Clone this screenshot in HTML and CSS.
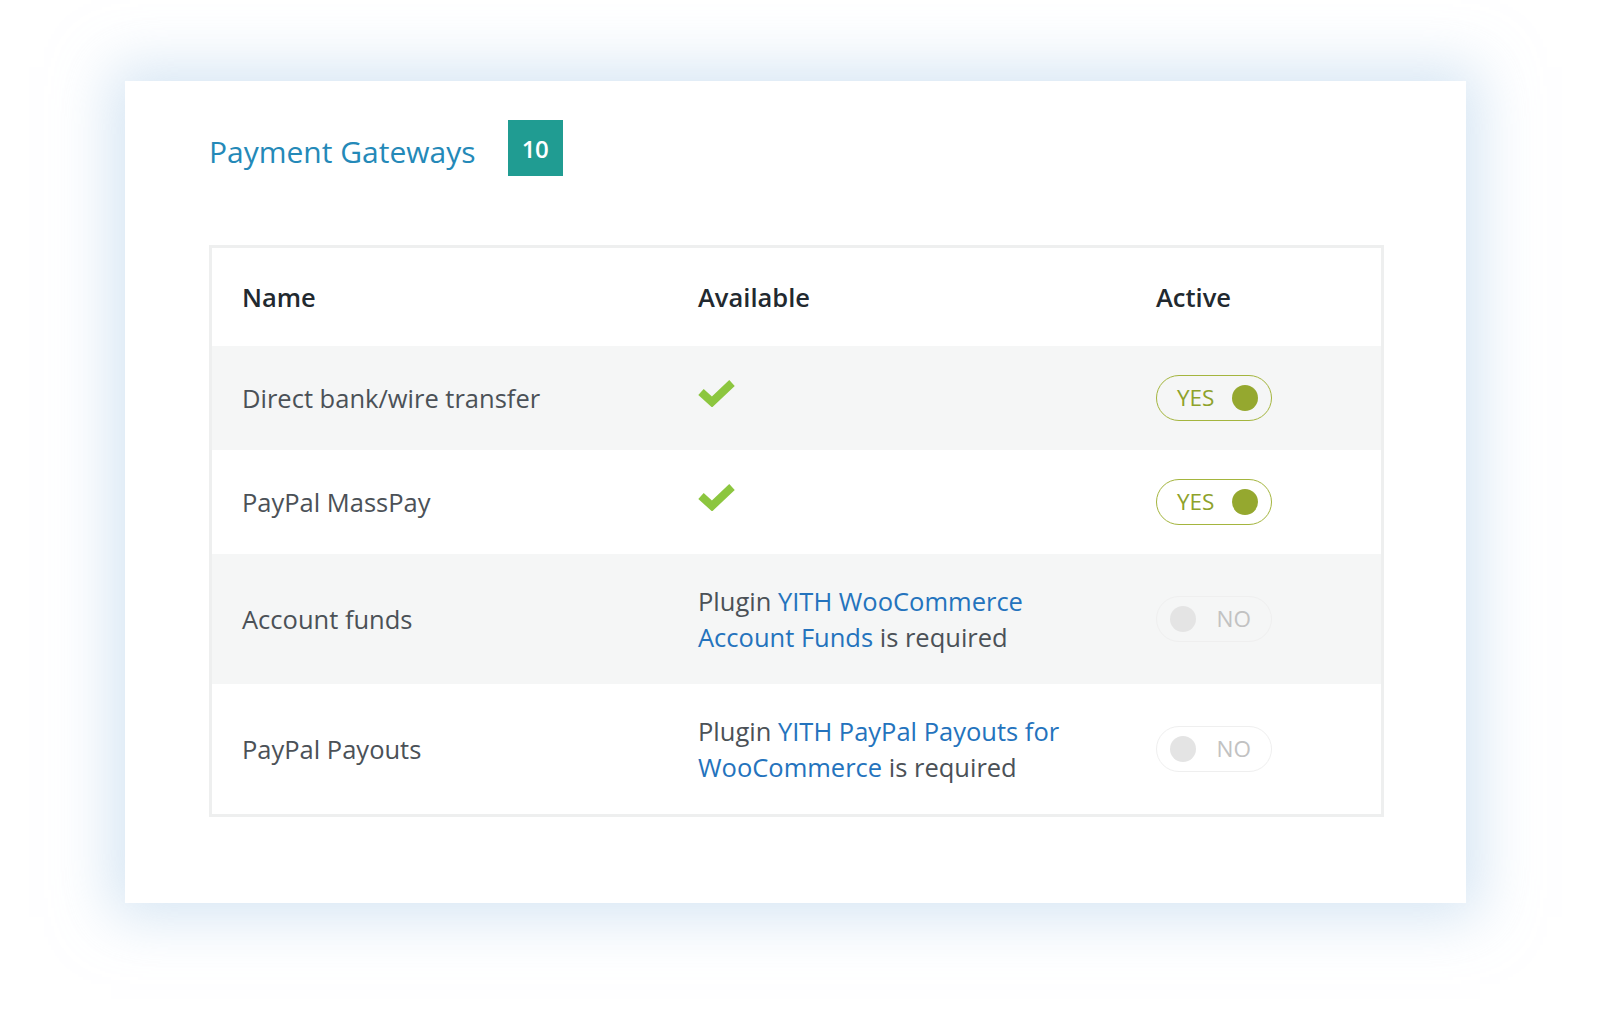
FILE: index.html
```html
<!DOCTYPE html>
<html lang="en">
<head>
<meta charset="utf-8">
<title>Payment Gateways</title>
<link rel="stylesheet" href="styles.css">
</head>
<body>
<div class="card">
  <div class="card-head">
    <h2 class="title">Payment Gateways</h2>
    <span class="badge">10</span>
  </div>
  <div class="table">
    <div class="row head">
      <div class="cell">Name</div>
      <div class="cell">Available</div>
      <div class="cell">Active</div>
    </div>
    <div class="row alt">
      <div class="cell">Direct bank/wire transfer</div>
      <div class="cell"><svg class="check" viewBox="0 0 38 28" width="38" height="28"><path d="M3 13 L14 23 L34 4" fill="none" stroke="#8cc63f" stroke-width="8"/></svg></div>
      <div class="cell"><span class="toggle on"><span class="tlabel">YES</span><span class="dot"></span></span></div>
    </div>
    <div class="row">
      <div class="cell">PayPal MassPay</div>
      <div class="cell"><svg class="check" viewBox="0 0 38 28" width="38" height="28"><path d="M3 13 L14 23 L34 4" fill="none" stroke="#8cc63f" stroke-width="8"/></svg></div>
      <div class="cell"><span class="toggle on"><span class="tlabel">YES</span><span class="dot"></span></span></div>
    </div>
    <div class="row alt">
      <div class="cell">Account funds</div>
      <div class="cell"><p class="req">Plugin <a href="#">YITH WooCommerce Account Funds</a> is required</p></div>
      <div class="cell"><span class="toggle off"><span class="dot"></span><span class="tlabel">NO</span></span></div>
    </div>
    <div class="row">
      <div class="cell">PayPal Payouts</div>
      <div class="cell"><p class="req">Plugin <a href="#">YITH PayPal Payouts for WooCommerce</a> is required</p></div>
      <div class="cell"><span class="toggle off"><span class="dot"></span><span class="tlabel">NO</span></span></div>
    </div>
  </div>
</div>
</body>
</html>
```
FILE: styles.css
```css
html, body {
  margin: 0;
  padding: 0;
  background: #ffffff;
}
body {
  font-family: "Open Sans", "Noto Sans", "Liberation Sans", sans-serif;
  padding: 81px 0 107px 125px;
  min-height: 1010px;
  box-sizing: border-box;
}
.card {
  width: 1341px;
  height: 822px;
  box-sizing: border-box;
  background: #ffffff;
  padding: 39px 82px 0 84px;
  box-shadow: 0 0 55px 14px rgba(178, 207, 234, 0.55);
}
.card-head {
  display: flex;
  align-items: center;
  gap: 32px;
}
.title {
  margin: 0;
  font-size: 30px;
  font-weight: 400;
  color: #2489b8;
  padding-top: 6px;
}
.badge {
  display: flex;
  align-items: center;
  justify-content: center;
  width: 55px;
  height: 56px;
  background: #209c92;
  color: #ffffff;
  font-size: 24px;
  font-weight: 600;
  letter-spacing: -0.5px;
}
.table {
  margin-top: 69px;
  border: 3px solid #eeefef;
}
.row {
  display: grid;
  grid-template-columns: 456px 458px 1fr;
  align-items: center;
  padding: 29px 0;
  font-size: 25.5px;
  line-height: 36px;
  color: #4b5157;
}
.row.head {
  padding: 31px 0;
  color: #22292f;
  font-weight: 600;
}
.row.alt {
  background: #f5f6f6;
}
.cell {
  padding-left: 30px;
}
.check {
  display: block;
  margin-top: -11px;
}
.req {
  margin: 0;
  max-width: 400px;
}
.req a {
  color: #2473bd;
  text-decoration: none;
}
.toggle {
  display: flex;
  align-items: center;
  justify-content: space-between;
  box-sizing: border-box;
  width: 116px;
  height: 46px;
  border-radius: 23px;
  padding: 0 13px 0 20px;
  font-size: 22.5px;
  font-weight: 500;
  line-height: 1;
}
.toggle.on {
  border: 1.5px solid #a4b53e;
  color: #8ea22b;
}
.toggle.off {
  border: 1.5px solid #efefef;
  color: #c2c2c2;
  padding: 0 20px 0 13px;
}
.dot {
  width: 26px;
  height: 26px;
  border-radius: 50%;
  background: #95a82f;
}
.toggle.off .dot {
  background: #e4e4e4;
}
```
